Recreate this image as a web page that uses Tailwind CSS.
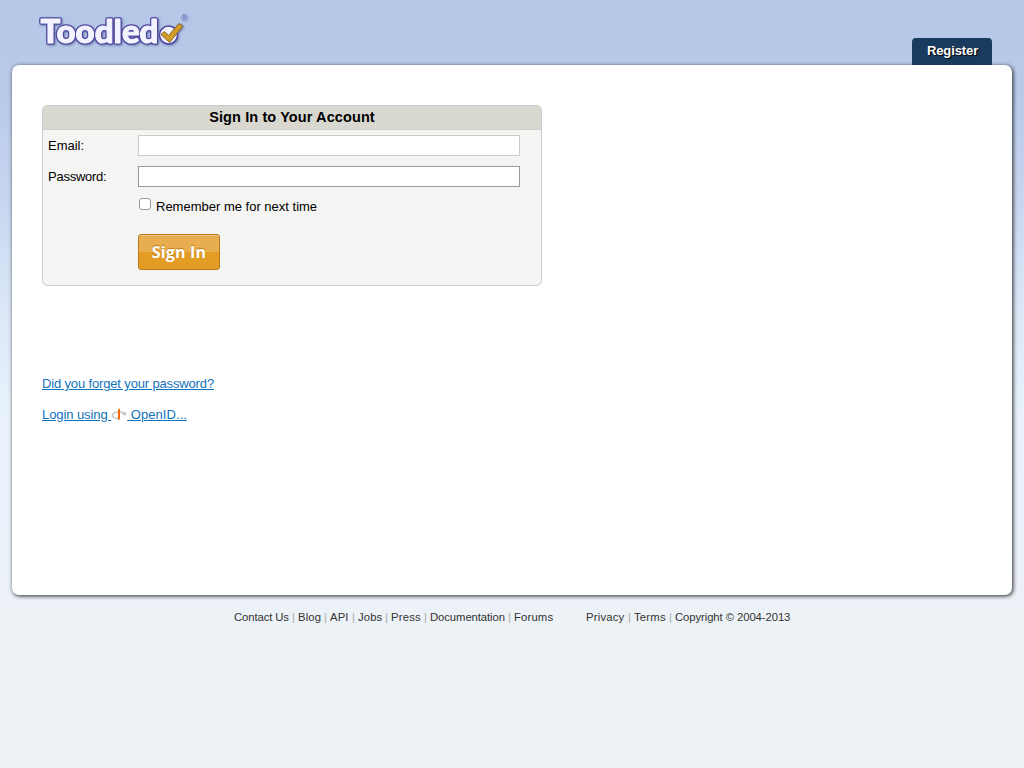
<!DOCTYPE html>
<html lang="en">
<head>
    <meta charset="UTF-8">
    <meta name="viewport" content="width=device-width, initial-scale=1.0">
    <title>Toodledo : Sign In</title>
    <script src="https://cdn.jsdelivr.net/npm/@tailwindcss/browser@4"></script>
</head>
<body class="h-screen overflow-hidden px-3 font-['Liberation_Sans',Arial,sans-serif] text-[13px] leading-[15px] text-black bg-[linear-gradient(to_bottom,#b5c7e7_0px,#b9caea_100px,#c7d6f0_200px,#dae6f7_300px,#e7f1fc_400px,#ebf2fb_520px,#edf2f6_630px,#eef2f5_768px)]">

    <header class="flex h-[65px] justify-between pl-6 pr-5">
        <a href="#" class="block">
            <svg class="block drop-shadow-[1px_1.5px_1px_#6f7fae]" width="160" height="60" viewBox="36 0 160 60">
                <g font-family="Lato, sans-serif" font-weight="900" font-size="33" stroke-linejoin="round">
                    <text x="40.500" y="43" textLength="118" lengthAdjust="spacingAndGlyphs" fill="#4f479f" stroke="#4f479f" stroke-width="3.600">Toodled</text>
                    <text x="40.500" y="43" textLength="118" lengthAdjust="spacingAndGlyphs" fill="#f3f4ff" stroke="#f3f4ff" stroke-width="1" aria-hidden="true">Toodled</text>
                </g>
                <circle cx="168.500" cy="35" r="9" fill="#f3f4ff" stroke="#4f479f" stroke-width="1.500"/>
                <path d="M161 34.500l3.500-3 4 4 10.500-12 4 2.500-13.500 16.500z" fill="#d29b27" stroke="#80642f" stroke-width="1" stroke-linejoin="round"/>
                <text x="181" y="21" font-family="Liberation Sans, sans-serif" font-size="9" fill="#6f69bb">®</text>
            </svg>
        </a>
        <a href="#" class="mt-[38px] h-[27px] w-20 rounded-t-[4px] bg-[#193b5e] pt-[5px] pl-px text-center font-bold tracking-[-0.1px] text-white [text-shadow:1px_1px_1px_#000]">Register</a>
    </header>

    <main class="h-[530px] w-[1000px] rounded-[7px] bg-white px-[30px] pt-10 shadow-[1px_1px_4px_#222]">
        <form class="h-[181px] w-[500px] overflow-hidden rounded-[5px] border border-[#ccc] bg-[#f4f4f2]">
            <h1 class="h-6 border-b border-[#ccc] bg-[#d8d8d0] pt-[3px] text-center text-[14.5px] leading-4 font-bold tracking-[0.1px]">Sign In to Your Account</h1>
            <div class="mt-[5px] flex h-[21px] items-center pl-[5px]">
                <label for="email" class="w-[90px]">Email:</label>
                <input type="text" id="email" name="email" class="h-[21px] w-[382px] border border-[#ccc] bg-white px-1">
            </div>
            <div class="mt-2.5 flex h-[21px] items-center pl-[5px]">
                <label for="pass" class="w-[90px] tracking-[-0.25px]">Password:</label>
                <input type="password" id="pass" name="pass" class="h-[21px] w-[382px] border border-[#999] bg-white px-1">
            </div>
            <div class="mt-[11px] flex h-[18px] pl-24">
                <input type="checkbox" id="remember" class="size-3 appearance-none rounded-[3px] border border-[#999] bg-white">
                <label for="remember" class="mt-px ml-[5px]">Remember me for next time</label>
            </div>
            <button type="submit" class="mt-[18px] ml-[95px] block h-9 w-[82px] rounded-[3px] border border-[#b87a18] bg-[linear-gradient(to_bottom,#e8ad4f_50%,#e39d25_50%)] font-['Open_Sans','Noto_Sans',sans-serif] text-[16px] leading-[34px] font-bold tracking-[0.2px] text-white shadow-[inset_0_1px_0_#efc581] [text-shadow:0_-1px_1px_#b87a18]">Sign In</button>
        </form>

        <div class="mt-[90px] flex flex-col items-start gap-4 text-[#1172bc]">
            <a href="#" class="tracking-[-0.15px] underline">Did you forget your password?</a>
            <a href="#" class="flex whitespace-pre"><span class="tracking-[-0.08px] underline">Login using </span><svg class="mt-px" width="16" height="14" viewBox="0 0 16 14">
                    <path d="M7 4C3.500 4.200 1.500 5.500 1.500 7.500S4 10.300 7 10.800M9 4c2 .1 3.200.600 4.500 1.600M14.500 3.800v2.700h-3" fill="none" stroke="#c4c4c4" stroke-width="1.400"/>
                    <path d="M7 1.500L9 .5v10.500l-2 1z" fill="#f60"/>
                </svg><span class="tracking-[0.06px] underline"> OpenID...</span></a>
        </div>
    </main>

    <footer class="mt-[15px] flex justify-center gap-[33px] text-[11.3px] leading-[14px] whitespace-nowrap text-[#333]">
        <div class="flex gap-[3px]">
            <a href="#" class="w-[55px] tracking-[-0.1px]">Contact Us</a><span class="w-[3px] text-[#aaa]">|</span>
            <a href="#" class="w-[23px] tracking-[0.1px]">Blog</a><span class="w-[3px] text-[#aaa]">|</span>
            <a href="#" class="w-[19px] tracking-[0.1px]">API</a><span class="w-[3px] text-[#aaa]">|</span>
            <a href="#" class="w-6 tracking-[0.1px]">Jobs</a><span class="w-[3px] text-[#aaa]">|</span>
            <a href="#" class="w-[30px] tracking-[0.2px]">Press</a><span class="w-[3px] text-[#aaa]">|</span>
            <a href="#" class="w-[75px] tracking-[-0.08px]">Documentation</a><span class="w-[3px] text-[#aaa]">|</span>
            <a href="#" class="w-[39px] tracking-[0.15px]">Forums</a>
        </div>
        <div class="flex gap-[3px]">
            <a href="#" class="w-[39px] tracking-[0.2px]">Privacy</a><span class="w-[3px] text-[#aaa]">|</span>
            <a href="#" class="w-8 tracking-[0.2px]">Terms</a><span class="w-[3px] text-[#aaa]">|</span>
            <a href="#" class="w-[115px] tracking-[-0.08px]">Copyright © 2004-2013</a>
        </div>
    </footer>

</body>
</html>
